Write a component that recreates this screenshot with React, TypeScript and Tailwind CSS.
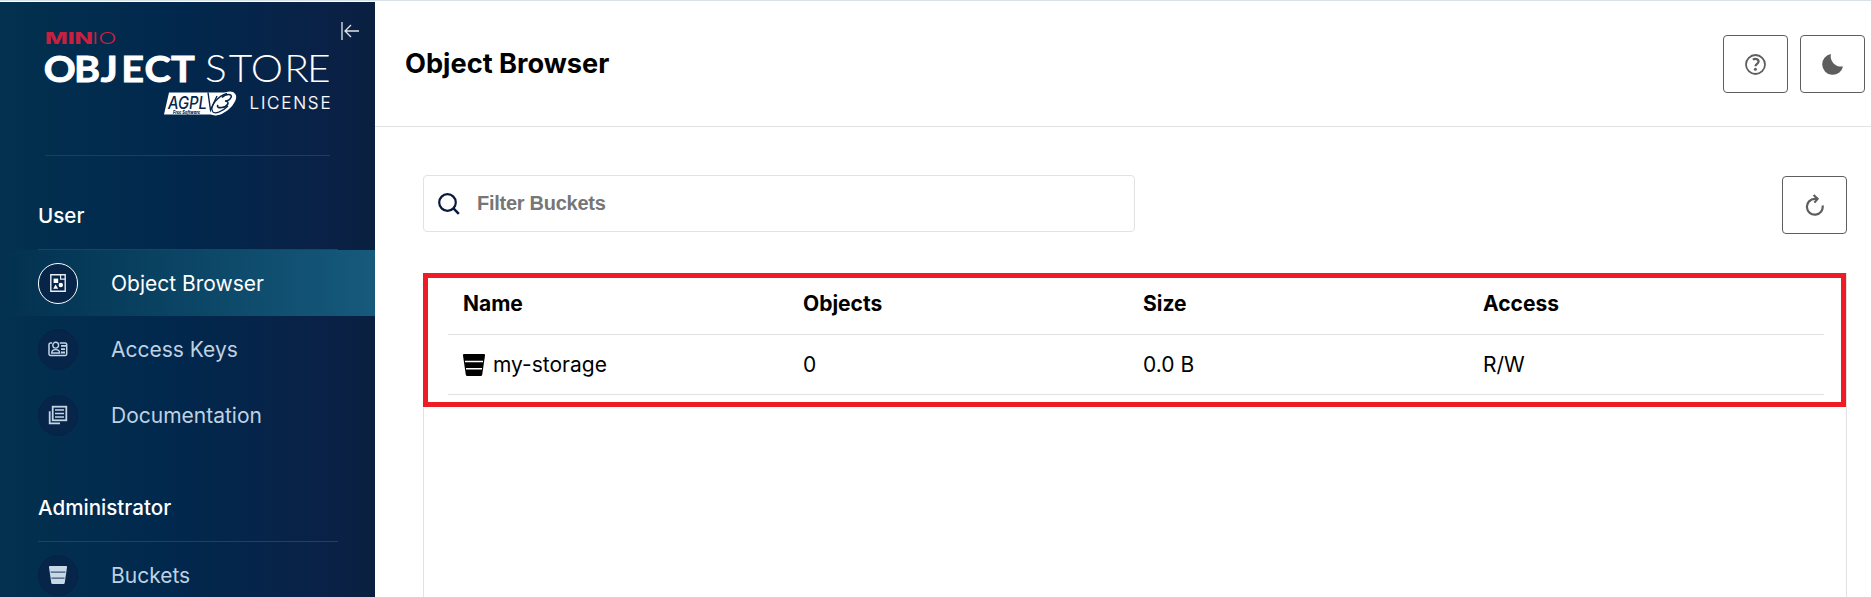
import React from "react";

const IconObjectBrowser = () => (
  <svg width="18" height="20" viewBox="0 0 18 20" fill="none">
    <path d="M1.8 1.8H16.2V18.2H1.8Z" stroke="#e9eef4" strokeWidth="1.4" />
    <path d="M11.6 1.8V6.2H16.2" stroke="#e9eef4" strokeWidth="1.2" />
    <rect x="4.6" y="5.6" width="4.6" height="4.4" fill="#fff" />
    <circle cx="11.8" cy="12" r="2.2" fill="#fff" />
    <path d="M6.6 11.4L9.2 15.8H4.2Z" fill="#fff" />
  </svg>
);

const IconAccessKeys = () => (
  <svg width="20" height="16" viewBox="0 0 20 16" fill="none">
    <path
      d="M4.2 2H2.4A1.4 1.4 0 0 0 1 3.4V13.1A1.4 1.4 0 0 0 2.4 14.5H17.3A1.4 1.4 0 0 0 18.7 13.1V3.4A1.4 1.4 0 0 0 17.3 2H11.8"
      stroke="#c3d4e3"
      strokeWidth="1.5"
    />
    <circle cx="7.7" cy="4.2" r="2.9" stroke="#c3d4e3" strokeWidth="1.4" />
    <path d="M3.7 12C3.7 9.7 5.3 8.6 7.7 8.6S11.6 9.7 11.6 12Z" stroke="#c3d4e3" strokeWidth="1.4" />
    <path d="M13 4.9h5.5M13 8.2h4M13 11.5h4" stroke="#c3d4e3" strokeWidth="1.8" />
  </svg>
);

const IconDocumentation = () => (
  <svg width="20" height="20" viewBox="0 0 20 20" fill="none" stroke="#c3d4e3">
    <rect x="4.7" y="1.7" width="13.6" height="13.6" strokeWidth="1.8" />
    <path d="M7 5h9M7 8.5h9M7 12h9" strokeWidth="1.6" />
    <path d="M1.7 6.2V18.3H12" strokeWidth="1.8" />
  </svg>
);

const IconBucket = ({ size, color, gap }: { size: number; color: string; gap: string }) => (
  <svg width={size} height={size} viewBox="0 0 22 22">
    <path d="M1 0H21Q22.2 0 22 1.4L19.2 20.8Q19 22 17.8 22H4.2Q3 22 2.8 20.8L0 1.4Q-0.2 0 1 0Z" fill={color} />
    <path d="M2 7.4H20M3 14.8H19" stroke={gap} strokeWidth="1.5" />
  </svg>
);

const Logo = () => (
  <svg width="286" height="88" viewBox="0 0 286 88" className="block overflow-visible">
    <g fill="#c72040" fontFamily="Inter, sans-serif">
      <text x="0" y="13.5" fontSize="16" fontWeight="800" textLength="48" lengthAdjust="spacingAndGlyphs">MIN</text>
      <text x="47" y="13.5" fontSize="16" fontWeight="300" textLength="24.5" lengthAdjust="spacingAndGlyphs">IO</text>
    </g>
    <g fill="#fff" fontFamily="Lato, sans-serif" fontSize="37">
      <text transform="scale(1.07 1)" x="-1.2 27.2 52 71.3 93 117.8" y="52" fontWeight="700" stroke="#fff" strokeWidth="0.9">OBJECT</text>
      <text transform="scale(1.1 1)" x="145.5 167 187 217.6 238.3" y="52" fontWeight="300">STORE</text>
    </g>
    <path d="M124 62.5H190L183 84.5H119Z" fill="#fff" />
    <text x="123" y="78.5" fontSize="17" fontStyle="italic" fontWeight="500" fill="#04264c" fontFamily="Inter, sans-serif" textLength="39" lengthAdjust="spacingAndGlyphs">AGPL</text>
    <text x="128" y="83.8" fontSize="4.6" fontStyle="italic" fontWeight="800" fill="#04264c" fontFamily="Inter, sans-serif" textLength="27" lengthAdjust="spacingAndGlyphs">Free Software</text>
    <path d="M183 61L195 61L186 88L174 88Z" fill="#04264c" />
    <ellipse cx="177.5" cy="73.5" rx="16" ry="8.5" transform="rotate(-38 177.5 73.5)" fill="#fff" />
    <path d="M163 62.5L165.5 80L172 66" fill="none" stroke="#04264c" strokeWidth="1.4" />
    <path d="M182 63.5C173 66 164.5 76 167.5 81.5C169.5 84.5 177 82 183 76" fill="none" stroke="#04264c" strokeWidth="1.3" />
    <path d="M177 67.5C180.5 63.5 188 63.5 186 67.5C184.5 70.5 181 71 180 71C186 71.5 182 77 177 77.5C173.5 78 171.5 77 173 75" fill="none" stroke="#04264c" strokeWidth="1.6" />
    <text x="204.5" y="79" fontSize="17" fontWeight="300" fill="#fff" stroke="#fff" strokeWidth="0.2" fontFamily="Inter, sans-serif" textLength="81" lengthAdjust="spacing">LICENSE</text>
  </svg>
);

function MenuItem({ label, icon, active }: { label: string; icon: React.ReactNode; active?: boolean }) {
  return (
    <div
      className={
        active
          ? "flex h-[66px] shrink-0 items-center bg-linear-to-r from-[#03314f] to-[#165a7c] pl-[38px] text-white"
          : "flex h-[66px] shrink-0 items-center pl-[38px] text-[#bfd1e2]"
      }
    >
      <div
        className={
          active
            ? "flex h-[41px] w-10 items-center justify-center rounded-full border border-white bg-[#072549]"
            : "flex h-[41px] w-10 items-center justify-center rounded-full border border-[#04234a] bg-[#072549]"
        }
      >
        {icon}
      </div>
      <span className="ml-[33px] pt-px text-[21px] leading-6">{label}</span>
    </div>
  );
}

const SectionTitle = ({ children }: { children: React.ReactNode }) => (
  <div className="ml-[38px] flex h-[66px] w-[300px] shrink-0 items-center border-b border-[#12466b] pb-px text-[20.6px] font-medium text-white">
    {children}
  </div>
);

const ToolButton = ({ children, label }: { children: React.ReactNode; label: string }) => (
  <button aria-label={label} className="flex h-[58px] w-[65px] items-center justify-center rounded-[4px] border border-[#5e5e5e] bg-white">
    {children}
  </button>
);

const cols = "ml-6 mr-[22px] grid grid-cols-[340px_340px_340px_1fr] items-center border-b border-[#e2e2e2] pl-[15px] text-[21px] text-black";

export default function App() {
  return (
    <div className="h-[597px] w-[1871px] overflow-hidden border-t border-[#d8e1e5] bg-white pt-px font-['Inter',sans-serif]">
      <div className="flex h-[595px]">
        <aside className="flex w-[375px] shrink-0 flex-col overflow-hidden bg-[linear-gradient(90deg,#03314f_0%,#01284d_44%,#0a2146_88%,#0a2040_100%)]">
          <div className="flex h-[153px] shrink-0 items-start">
            <div className="ml-[45px] mt-[28px] w-[286px]">
              <Logo />
            </div>
            <svg width="20" height="20" viewBox="0 0 20 20" fill="none" stroke="#dfe5ec" strokeWidth="1.3" className="ml-[9px] mt-[19px]">
              <path d="M2 1V19M19 10H5.5M11 4L5 10L11 16" />
            </svg>
          </div>
          <div className="ml-[45px] h-px w-[285px] shrink-0 bg-[#12426a]" />
          <div className="h-[28px] shrink-0" />
          <SectionTitle>User</SectionTitle>
          <MenuItem label="Object Browser" icon={<IconObjectBrowser />} active />
          <MenuItem label="Access Keys" icon={<IconAccessKeys />} />
          <MenuItem label="Documentation" icon={<IconDocumentation />} />
          <div className="h-[28px] shrink-0" />
          <SectionTitle>Administrator</SectionTitle>
          <MenuItem label="Buckets" icon={<IconBucket size={18} color="#c8d8e6" gap="#3a5576" />} />
        </aside>

        <main className="flex min-w-0 flex-1 flex-col">
          <header className="flex h-[125px] shrink-0 items-center justify-between border-b border-[#e2e2e2] pl-[30px] pr-[6px]">
            <h1 className="text-[27.2px] font-bold leading-8 text-black">Object Browser</h1>
            <div className="flex gap-3">
              <ToolButton label="Help">
                <svg width="21" height="21" viewBox="0 0 21 21" fill="none" stroke="#5e5e5e">
                  <circle cx="10.5" cy="10.5" r="9.5" strokeWidth="1.8" />
                  <path d="M7.8 5.6C10 4.4 13.6 4.7 13.6 7.6C13.6 9.9 10.5 9.7 10.5 12.2" strokeWidth="2.2" />
                  <circle cx="10.4" cy="15.2" r="1.5" fill="#5e5e5e" stroke="none" />
                </svg>
              </ToolButton>
              <ToolButton label="Dark mode">
                <svg width="21" height="21" viewBox="0 0 21 21" fill="#5e5e5e">
                  <path d="M9 0A10.5 10.5 0 1 0 21 12.4A10.2 10.2 0 0 1 9 0Z" />
                </svg>
              </ToolButton>
            </div>
          </header>

          <section className="flex flex-1 flex-col pl-12 pr-6 pt-12">
            <div className="flex items-start justify-between">
              <div className="flex h-[57px] w-[712px] items-center rounded-[4px] border border-[#e2e2e2] pl-[14px]">
                <svg width="22" height="22" viewBox="0 0 22 22" fill="none" stroke="#07193e" strokeWidth="2.2">
                  <circle cx="9.5" cy="9.5" r="8.3" />
                  <path d="M15.2 15.2L20.8 20.8" strokeWidth="2.5" />
                </svg>
                <span className="ml-[17px] pb-px font-['Liberation_Sans',Arial,sans-serif] text-[20px] font-bold tracking-[-0.27px] text-[#767676]">Filter Buckets</span>
              </div>
              <div className="mt-px">
                <ToolButton label="Refresh">
                  <svg width="20" height="22" viewBox="0 0 20 22" fill="none" stroke="#5e5e5e" strokeWidth="2.2">
                    <path d="M17.6 11.5A7.9 7.9 0 1 1 9.8 4.9H12" />
                    <path d="M8.6 1L12.6 4.9L9.4 8.6" />
                  </svg>
                </ToolButton>
              </div>
            </div>

            <div className="relative mt-[39px] flex-1 border border-b-0 border-[#e2e2e2] pt-1">
              <div className={`${cols} h-[57px] pb-1 font-bold`}>
                <span>Name</span>
                <span>Objects</span>
                <span>Size</span>
                <span>Access</span>
              </div>
              <div className={`${cols} h-[60px]`}>
                <span className="flex items-center gap-2">
                  <IconBucket size={22} color="#000" gap="#fff" />
                  my-storage
                </span>
                <span>0</span>
                <span>0.0 B</span>
                <span>R/W</span>
              </div>
              <div className="absolute -left-px -top-px h-[134px] w-[1423px] border-[5px] border-[#ee1c24]" />
            </div>
          </section>
        </main>
      </div>
    </div>
  );
}
